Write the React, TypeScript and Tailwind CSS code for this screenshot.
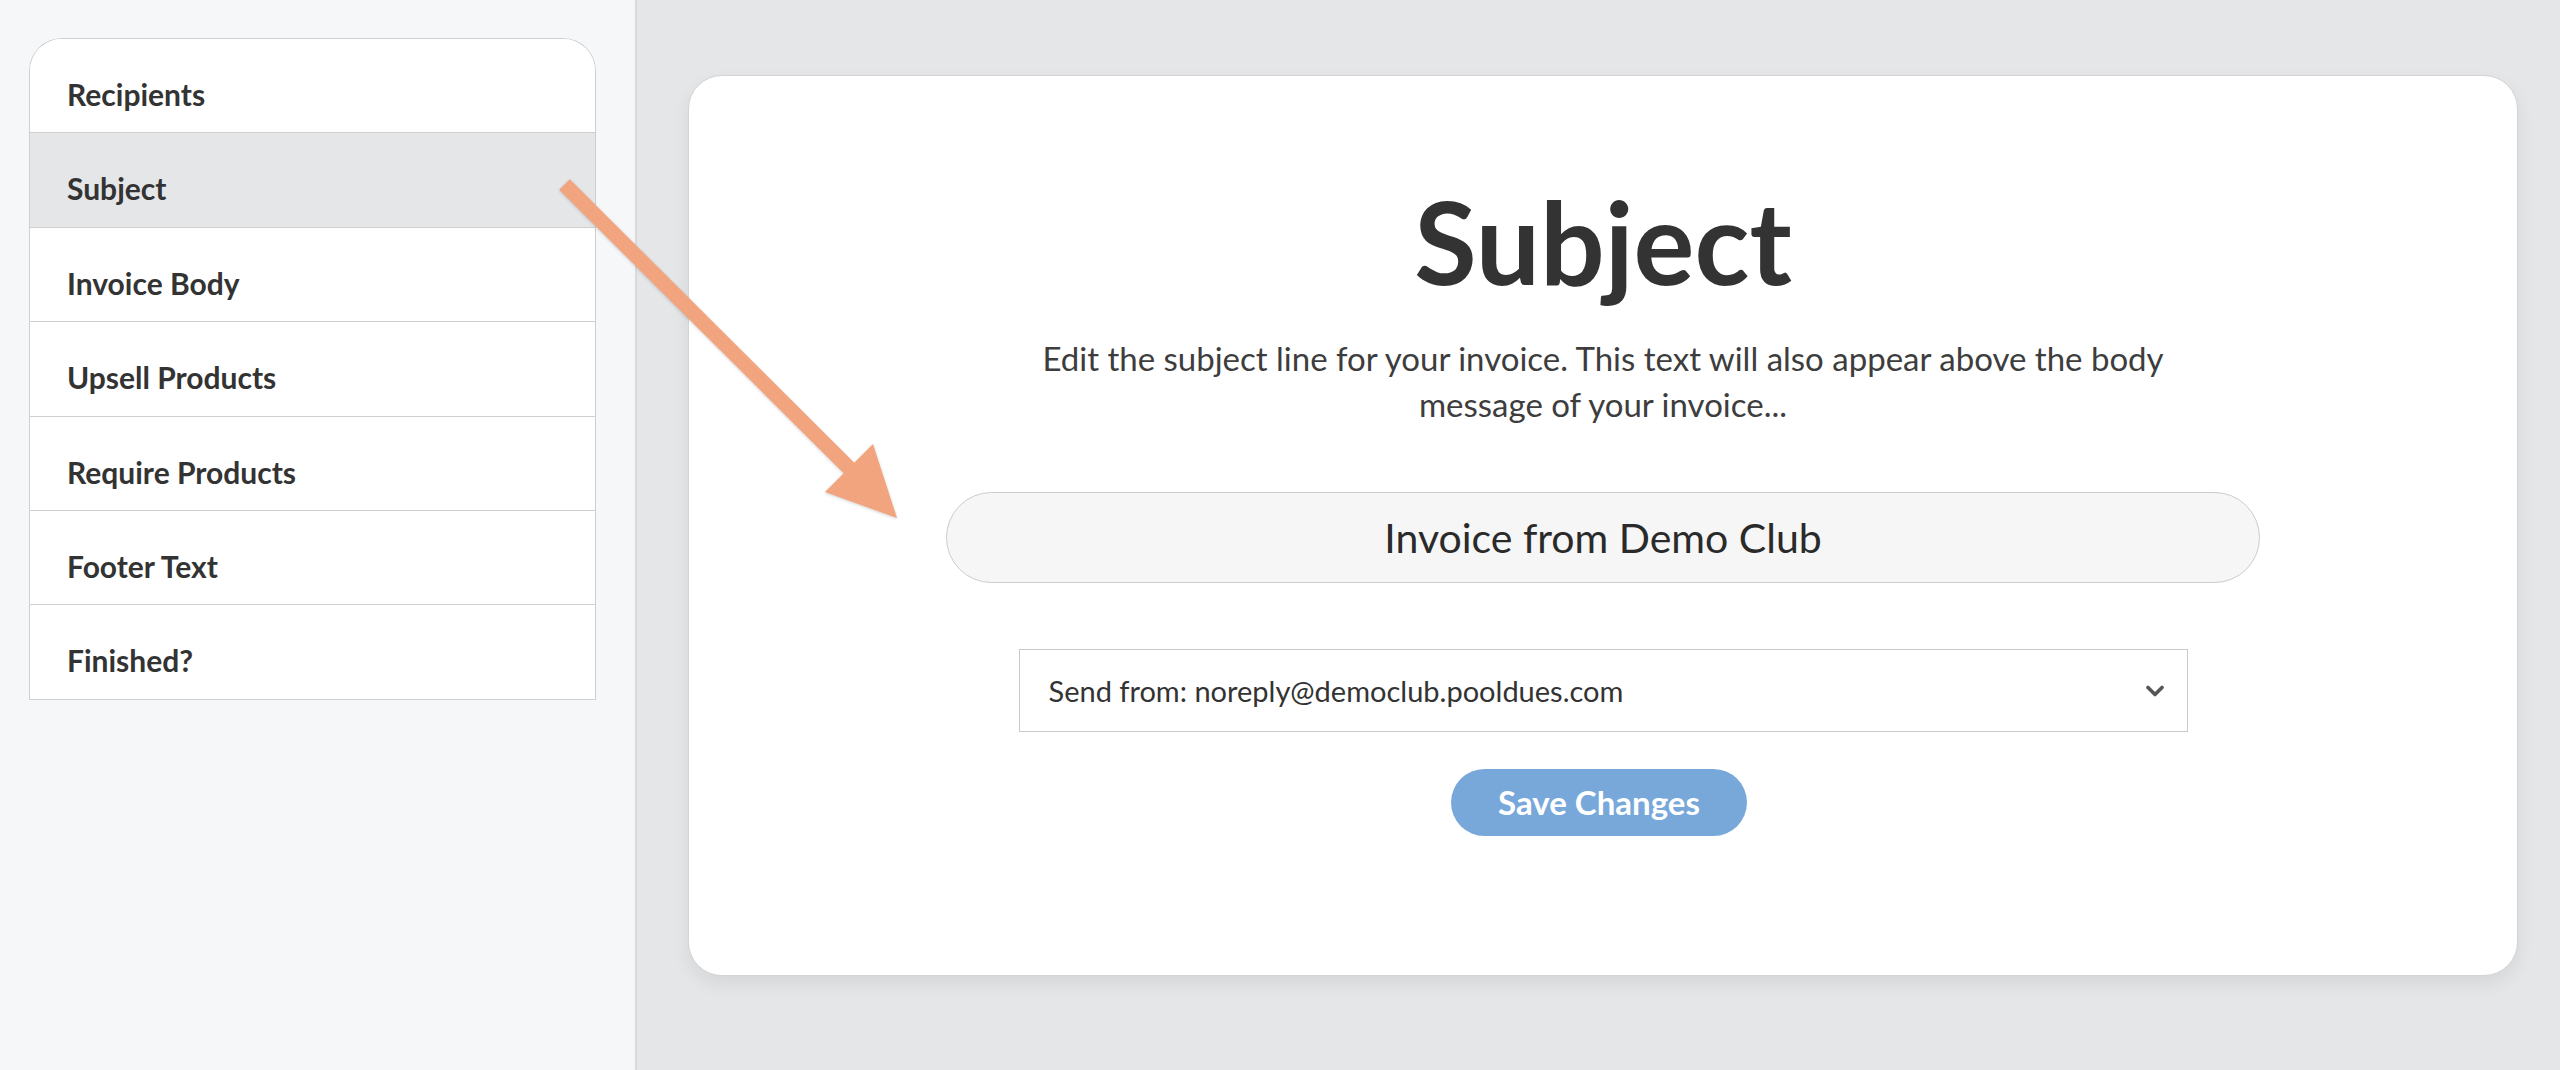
import React from "react";

const items = [
  "Recipients",
  "Subject",
  "Invoice Body",
  "Upsell Products",
  "Require Products",
  "Footer Text",
  "Finished?",
];

export default function App() {
  return (
    <div className="relative flex h-[1070px] w-[2560px] overflow-hidden font-['Lato','Open_Sans',sans-serif] text-[#333]">
      <aside className="h-full w-[637px] shrink-0 border-r-2 border-[#d9dadc] bg-[#f6f7f9] pl-[29px] pt-[38px]">
        <nav className="w-[567px] overflow-hidden rounded-t-[33px] border-x border-t border-[#cfcfcf] bg-white">
          {items.map((label) => (
            <div
              key={label}
              className={`h-[94.4px] border-b border-[#cfcfcf] pl-[37px] pt-[38px] text-[30px] font-bold leading-[34px] ${
                label === "Subject" ? "bg-[#e5e6e8]" : "bg-white"
              }`}
            >
              {label}
            </div>
          ))}
        </nav>
      </aside>

      <main className="h-full flex-1 bg-[#e5e6e8] pl-[51px] pr-[42px] pt-[75px]">
        <div className="flex h-[901px] flex-col items-center rounded-[34px] border border-[#d4d4d6] bg-white pt-[108px] shadow-[0_8px_18px_rgba(0,0,0,0.07)]">
          <h1 className="text-[114px] font-bold leading-none text-[#333]">Subject</h1>
          <p className="mt-[37px] max-w-[1200px] text-center text-[33px] leading-[46px] text-[#3d3d3d]">
            Edit the subject line for your invoice. This text will also appear above the body message of your invoice...
          </p>
          <div className="mt-[65px] flex h-[91px] w-[1314px] items-center justify-center rounded-full border border-[#cccccc] bg-[#f6f6f6] text-[41px] text-[#2a2a2a]">
            Invoice from Demo Club
          </div>
          <div className="mt-[66px] flex h-[83px] w-[1169px] items-center justify-between border border-[#c9c9c9] bg-white pl-[29px] pr-[23px] text-[29px] text-[#333]">
            <span>Send from: noreply@democlub.pooldues.com</span>
            <svg width="18" height="12" viewBox="0 0 18 12" fill="none">
              <path d="M2 2.5 L9 9.5 L16 2.5" stroke="#555" strokeWidth="3.6" strokeLinecap="round" strokeLinejoin="round" />
            </svg>
          </div>
          <button className="mr-[8px] mt-[37px] flex h-[67px] w-[296px] items-center justify-center rounded-full bg-[#78a8da] text-[33px] font-bold text-white">
            Save Changes
          </button>
        </div>
      </main>

      <svg
        className="pointer-events-none absolute left-0 top-0"
        width="2560"
        height="1070"
        viewBox="0 0 2560 1070"
        style={{ filter: "drop-shadow(0 1px 1.5px rgba(0,0,0,0.18))" }}
      >
        <line x1="564.5" y1="184.5" x2="852" y2="471" stroke="#f2a47e" strokeWidth="15" />
        <polygon points="897,518 873,444 825,492" fill="#f2a47e" />
      </svg>
    </div>
  );
}
